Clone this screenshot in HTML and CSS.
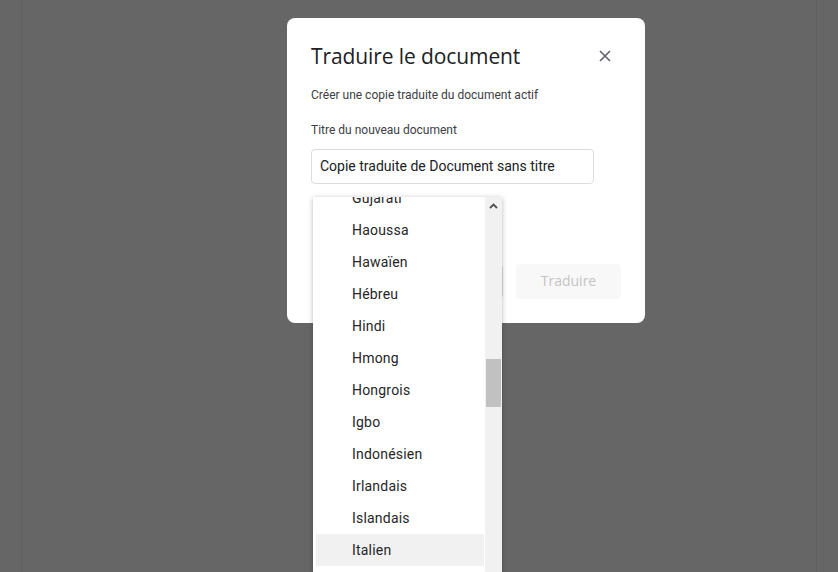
FILE: index.html
```html
<!DOCTYPE html>
<html lang="fr">
<head>
<meta charset="utf-8">
<title>Traduire le document</title>
<link rel="stylesheet" href="styles.css">
</head>
<body>
<div class="backdrop">
  <div class="doc"></div>
</div>

<div class="dialog">
  <div class="dialog-head">
    <h1 class="dialog-title">Traduire le document</h1>
    <button class="close" aria-label="Fermer">
      <svg width="12" height="12" viewBox="0 0 12 12"><path d="M1 1 L11 11 M11 1 L1 11" stroke="#5f6368" stroke-width="1.6" fill="none"/></svg>
    </button>
  </div>
  <p class="subtitle">Créer une copie traduite du document actif</p>
  <p class="label">Titre du nouveau document</p>
  <div class="input">Copie traduite de Document sans titre</div>
  <div class="lang-area"></div>
  <div class="actions">
    <button class="btn btn-cancel">Annuler</button>
    <button class="btn btn-primary" disabled>Traduire</button>
  </div>
</div>

<div class="menu">
  <div class="menu-list">
    <div class="item">Gujarati</div>
    <div class="item">Haoussa</div>
    <div class="item">Hawaïen</div>
    <div class="item">Hébreu</div>
    <div class="item">Hindi</div>
    <div class="item">Hmong</div>
    <div class="item">Hongrois</div>
    <div class="item">Igbo</div>
    <div class="item">Indonésien</div>
    <div class="item">Irlandais</div>
    <div class="item">Islandais</div>
    <div class="item item-hover">Italien</div>
  </div>
  <div class="scrollbar">
    <div class="scroll-up">
      <svg width="9" height="6" viewBox="0 0 9 6"><path d="M1 5 L4.5 1.5 L8 5" stroke="#505050" stroke-width="1.8" fill="none"/></svg>
    </div>
    <div class="scroll-thumb"></div>
  </div>
</div>
</body>
</html>
```

FILE: styles.css
```css
html, body {
  margin: 0;
  padding: 0;
  width: 838px;
  height: 572px;
  overflow: hidden;
  background: #666666;
  font-family: Roboto, "Liberation Sans", Arial, sans-serif;
}

.backdrop {
  height: 572px;
  padding: 0 21px;
  box-sizing: border-box;
}

.doc {
  height: 100%;
  border-left: 1px solid #606060;
  border-right: 1px solid #606060;
}

.dialog {
  position: absolute;
  left: 287px;
  top: 18px;
  width: 358px;
  box-sizing: border-box;
  padding: 24px;
  background: #ffffff;
  border-radius: 8px;
  display: flex;
  flex-direction: column;
}

.dialog-head {
  display: flex;
  align-items: center;
  justify-content: space-between;
  height: 28px;
}

.dialog-title {
  margin: 0;
  font-family: "Open Sans", Roboto, sans-serif;
  font-weight: 400;
  font-size: 21px;
  line-height: 28px;
  color: #202124;
  letter-spacing: -0.1px;
}

.close {
  border: 0;
  background: none;
  padding: 0;
  margin-right: 10px;
  width: 12px;
  height: 12px;
  display: flex;
}

.subtitle {
  margin: 17px 0 0 0;
  font-size: 12px;
  line-height: 16px;
  color: #3c4043;
}

.label {
  margin: 19px 0 0 0;
  font-size: 12px;
  line-height: 16px;
  color: #3c4043;
}

.input {
  margin-top: 11px;
  width: 283px;
  height: 35px;
  box-sizing: border-box;
  border: 1px solid #dadce0;
  border-radius: 4px;
  padding: 0 8px;
  font-size: 14px;
  line-height: 33px;
  color: #202124;
}

.lang-area {
  height: 80px;
}

.actions {
  display: flex;
  justify-content: flex-end;
  gap: 13px;
}

.btn {
  height: 35px;
  box-sizing: border-box;
  border-radius: 4px;
  font-family: "Open Sans", Roboto, sans-serif;
  font-size: 14px;
  padding: 0 0 2px 0;
}

.btn-cancel {
  width: 92px;
  background: #ffffff;
  border: 1px solid #dadce0;
  color: #1a73e8;
}

.btn-primary {
  width: 105px;
  border: 0;
  background: #f8f8f8;
  color: #c4c4c4;
}

.menu {
  position: absolute;
  left: 313px;
  top: 197px;
  width: 189px;
  height: 400px;
  background: #ffffff;
  box-shadow: 0 1px 5px rgba(0, 0, 0, 0.28);
  display: flex;
  overflow: hidden;
}

.menu-list {
  flex: 1;
  margin-top: -15px;
  padding: 0 1px 0 3px;
}

.item {
  height: 32px;
  line-height: 32px;
  padding-left: 36px;
  font-size: 14px;
  letter-spacing: 0.2px;
  color: #262626;
}

.item-hover {
  background: #f1f1f1;
}

.scrollbar {
  width: 17px;
  background: #f1f1f1;
  display: flex;
  flex-direction: column;
  align-items: center;
}

.scroll-up {
  height: 17px;
  display: flex;
  align-items: center;
  justify-content: center;
  width: 100%;
}

.scroll-thumb {
  margin-top: 145px;
  width: 15px;
  height: 48px;
  background: #c1c1c1;
}
```
